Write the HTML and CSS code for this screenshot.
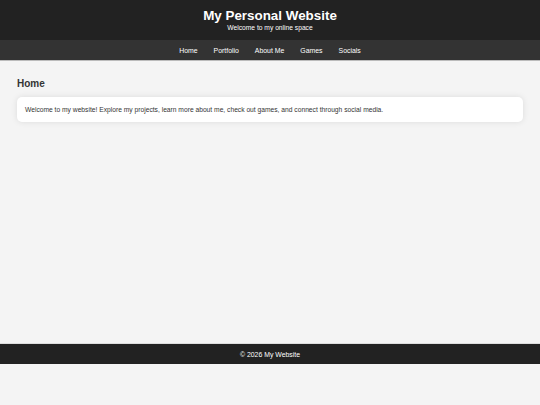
FILE: index.html
```html
<!DOCTYPE html>
<html lang="en">
<head>
    <meta charset="UTF-8">
    <title>My Personal Website</title>
    <meta name="viewport" content="width=device-width, initial-scale=1.0">
    <link rel="stylesheet" href="styles.css">
</head>
<body>

    <!-- Header -->
    <header class="site-header">
        <h1>My Personal Website</h1>
        <p class="tagline">Welcome to my online space</p>
    </header>

    <!-- Navigation -->
    <nav class="site-nav">
        <a href="#">Home</a>
        <a href="#">Portfolio</a>
        <a href="#">About Me</a>
        <a href="#">Games</a>
        <a href="#">Socials</a>
    </nav>

    <!-- Main Content -->
    <main class="content">
        <h2>Home</h2>
        <div class="card">
            <p>Welcome to my website! Explore my projects, learn more about me, check out games, and connect through social media.</p>
        </div>
    </main>

    <footer class="site-footer">
        <p>&copy; 2026 My Website</p>
    </footer>

</body>
</html>
```

FILE: styles.css
```css
/* Simple styling */
body {
    font-family: "Liberation Sans", Arial, sans-serif;
    margin: 0;
    background-color: #f4f4f4;
    color: #333;
}
.site-header {
    background-color: #222;
    color: #fff;
    text-align: center;
    height: 40px;
    box-sizing: border-box;
    padding-top: 8px;
}
.site-header h1 {
    margin: 0;
    font-size: 13.4px;
    line-height: 16px;
}
.tagline {
    margin: 0;
    font-size: 6.7px;
    line-height: 8px;
}
.site-nav {
    background-color: #333;
    height: 20px;
    display: flex;
    justify-content: center;
    align-items: center;
    gap: 16px;
    border-bottom: 1px solid #bbb;
}
.site-nav a {
    color: #fff;
    text-decoration: none;
    font-size: 6.9px;
}
.content {
    min-height: 282px;
    box-sizing: border-box;
    padding: 17px 17px 13px;
}
.content h2 {
    margin: 0 0 7px;
    font-size: 10px;
    line-height: 12px;
}
.card {
    background-color: #fff;
    border-radius: 5px;
    padding: 9px 8px;
    box-shadow: 0 0 6px rgba(0, 0, 0, 0.1);
}
.card p {
    margin: 0;
    font-size: 6.7px;
    line-height: 7px;
}
.site-footer {
    background-color: #222;
    color: #fff;
    text-align: center;
    height: 20px;
    border-top: 1px solid #ddd;
    display: flex;
    align-items: center;
    justify-content: center;
}
.site-footer p {
    margin: 0;
    font-size: 6.9px;
}
```
